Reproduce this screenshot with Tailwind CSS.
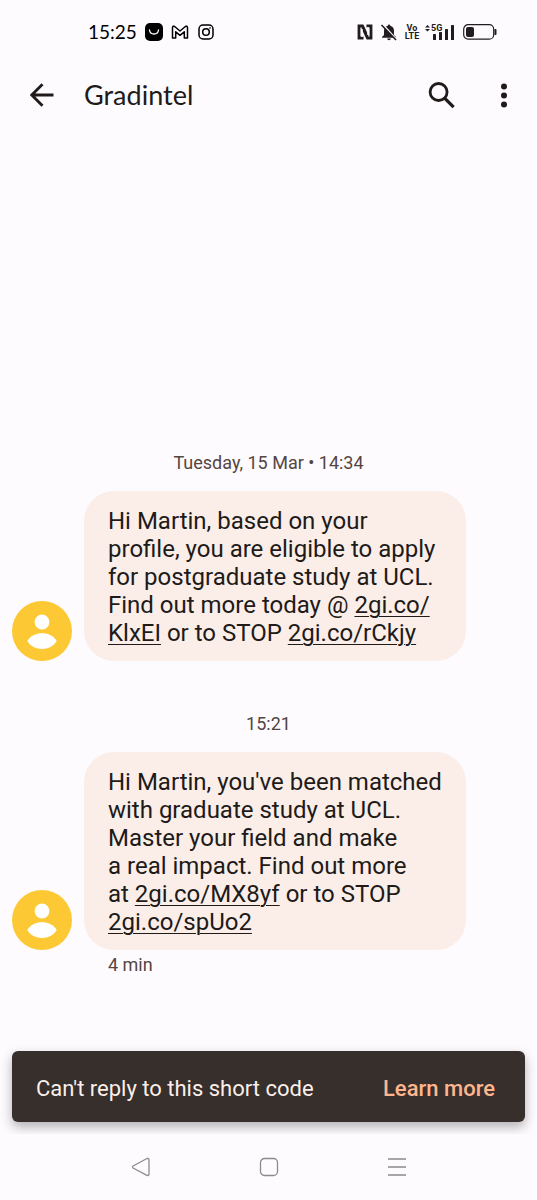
<!DOCTYPE html>
<html lang="en">
<head>
<meta charset="utf-8">
<meta name="viewport" content="width=device-width, initial-scale=1">
<title>Gradintel</title>
<script src="https://cdn.jsdelivr.net/npm/@tailwindcss/browser@4"></script>
</head>
<body class="flex min-h-screen flex-col bg-[#fefbff] font-['Roboto',sans-serif] text-[#201a18]">

<div class="flex h-16 items-center justify-between pr-10 pl-[88px] text-black">
  <div class="flex items-center">
    <time class="w-[57px] font-['Lato',sans-serif] text-[19px] leading-6">15:25</time>
    <svg class="h-[18px] w-[18px]" viewBox="0 0 18 18" aria-hidden="true"><rect width="18" height="18" rx="5"/><path d="M4.500 7c.5 5.300 8.500 5.300 9 0" fill="none" stroke="#fff" stroke-width="1.300" stroke-linecap="round"/></svg>
    <svg class="ml-2 h-[18px] w-[18px]" viewBox="0 0 18 18" fill="none" stroke="currentColor" stroke-width="1.500" stroke-linejoin="round" aria-hidden="true"><path d="M1.500 15V4.500Q2 2.600 3.600 3.500L9 8l5.400-4.500Q16 2.600 16.500 4.500V15h-3.200V8.800L9 12.300 4.700 8.800V15z"/></svg>
    <svg class="ml-2 h-[18px] w-[18px]" viewBox="0 0 18 18" fill="none" stroke="currentColor" stroke-width="1.500" aria-hidden="true"><rect x="2" y="2" width="14" height="14" rx="4"/><circle cx="9" cy="9" r="3.300"/><circle cx="13" cy="5" r=".4" stroke-width="1"/></svg>
  </div>
  <div class="flex items-center text-[#201c20]">
    <svg class="h-4 w-4" viewBox="0 0 16 16" fill="none" stroke="currentColor" aria-hidden="true"><path d="M6.500 14H2V2h3.500l4.800 10" stroke-width="2.800"/><path d="M9.500 2H14v12h-3.500L5.700 4" stroke-width="2.800"/><path d="M5 5v8M11 3v8" stroke="#fefbff" stroke-width="1.500"/></svg>
    <svg class="ml-[7px] h-[18px] w-[18px]" viewBox="0 0 18 18" aria-hidden="true"><path fill="currentColor" d="M9 1.500c.8 0 1.200.6 1.200 1.300 2.500.7 3.800 2.500 3.800 5V12l2 2v.8H2V14l2-2V7.800c0-2.500 1.300-4.300 3.800-5 0-.7.4-1.300 1.200-1.300zM7.200 15.500h3.600a1.800 1.800 0 0 1-3.600 0z"/><path d="M2.500 1l14 15.500" stroke="#fefbff" stroke-width="1.800"/><path d="M1.500 2l14.500 15" stroke="currentColor" stroke-width="1.600"/></svg>
    <span class="ml-2 flex w-3 flex-col items-center text-[9px] leading-[8px] font-bold"><span>Vo</span><span>LTE</span></span>
    <svg class="ml-[7px] h-[18px] w-[30px]" viewBox="0 0 30 18" fill="currentColor" aria-hidden="true"><path d="M0 4.500L2.500 2 5 4.500zM0 6h5L2.500 8.500z"/><text x="6" y="8" font-size="9" font-weight="700">5G</text><rect x="8" y="11" width="3" height="6" rx=".5"/><rect x="14" y="9" width="3" height="8" rx=".5"/><rect x="20" y="6" width="3" height="11" rx=".5"/><rect x="26" y="2" width="3" height="15" rx=".5"/></svg>
    <svg class="ml-2 h-4 w-[34px]" viewBox="0 0 34 16" aria-hidden="true"><rect x=".7" y=".7" width="30" height="14.500" rx="4.500" fill="none" stroke="currentColor" stroke-width="1.200"/><rect x="3" y="3" width="8" height="10" rx="2" fill="currentColor"/><path d="M31.500 5h1q1 0 1 1v4q0 1-1 1h-1z" fill="currentColor"/></svg>
  </div>
</div>

<header class="flex h-[62px] items-center pr-[19px] pl-[30px]">
  <button type="button" aria-label="Back" class="h-6 w-6"><svg viewBox="0 0 24 24" fill="none" stroke="currentColor" stroke-width="2.800" aria-hidden="true"><path d="M23.500 12H2M12.500 1.200L1.800 12l10.700 10.800"/></svg></button>
  <h1 class="ml-[30px] flex-1 font-['Lato',sans-serif] text-[27px] leading-8">Gradintel</h1>
  <button type="button" aria-label="Search" class="h-7 w-7"><svg viewBox="0 0 28 28" fill="none" stroke="currentColor" stroke-width="2.800" aria-hidden="true"><circle cx="10.600" cy="11" r="8.500"/><path d="M16.600 17.200l9 9" stroke-width="3.200"/></svg></button>
  <button type="button" aria-label="More options" class="ml-[34px] h-7 w-7"><svg viewBox="0 0 28 28" fill="currentColor" aria-hidden="true"><circle cx="14" cy="5.500" r="3"/><circle cx="14" cy="14.500" r="3"/><circle cx="14" cy="23.500" r="3"/></svg></button>
</header>

<main class="flex flex-1 flex-col justify-end overflow-hidden px-3 pb-3">
  <time class="mb-4 text-center text-lg leading-6 text-[#534541]">Tuesday, 15 Mar • 14:34</time>
  <div class="flex items-end gap-3">
    <svg class="h-[60px] w-[60px] shrink-0" viewBox="0 0 60 60" aria-hidden="true"><circle cx="30" cy="30" r="30" fill="#fcc934"/><circle cx="30" cy="21" r="7.400" fill="#fff"/><path d="M15.300 40C21 29.500 39 29.500 44.700 40 39 50.500 21 50.500 15.300 40z" fill="#fff"/></svg>
    <p class="w-full max-w-[382px] rounded-[30px] bg-[#fbeee9] px-6 pt-4 pb-[14px] text-2xl leading-7">Hi Martin, based on your<br>profile, you are eligible to apply<br>for postgraduate study at UCL.<br>Find out more today @ <a href="#" class="underline decoration-1 underline-offset-3">2gi.co/<br>KlxEI</a> or to STOP <a href="#" class="underline decoration-1 underline-offset-3">2gi.co/rCkjy</a></p>
  </div>
  <time class="mt-[51px] mb-4 text-center text-lg leading-6 text-[#534541]">15:21</time>
  <div class="flex items-end gap-3">
    <svg class="h-[60px] w-[60px] shrink-0" viewBox="0 0 60 60" aria-hidden="true"><circle cx="30" cy="30" r="30" fill="#fcc934"/><circle cx="30" cy="21" r="7.400" fill="#fff"/><path d="M15.300 40C21 29.500 39 29.500 44.700 40 39 50.500 21 50.500 15.300 40z" fill="#fff"/></svg>
    <p class="w-full max-w-[382px] rounded-[30px] bg-[#fbeee9] px-6 pt-4 pb-[14px] text-2xl leading-7">Hi Martin, you've been matched<br>with graduate study at UCL.<br>Master your field and make<br>a real impact. Find out more<br>at <a href="#" class="underline decoration-1 underline-offset-3">2gi.co/MX8yf</a> or to STOP<br><a href="#" class="underline decoration-1 underline-offset-3">2gi.co/spUo2</a></p>
  </div>
  <span class="mt-[3px] ml-24 text-lg leading-6 text-[#534541]">4 min</span>
  <div role="status" class="mt-[74px] flex h-[71px] items-center justify-between rounded-md bg-[#362f2c] pt-1 pr-[30px] pl-6 text-[22px] leading-8 text-[#fbeee9] shadow-[0_5px_12px_rgba(0,0,0,0.3)]">
    <span>Can't reply to this short code</span>
    <button type="button" class="font-medium text-[#ffb68f]">Learn more</button>
  </div>
</main>

<nav aria-label="System navigation" class="flex h-[66px] items-center justify-center gap-[108px] text-[#8d898e]">
  <button type="button" aria-label="Back" class="h-5 w-5"><svg viewBox="0 0 20 20" fill="none" stroke="currentColor" stroke-width="1.300" stroke-linejoin="round" aria-hidden="true"><path d="M2 9L16 1.500Q18 1 18 3V17Q18 19 16 18.300L2 11Q1 10 2 9z"/></svg></button>
  <button type="button" aria-label="Home" class="h-5 w-5"><svg viewBox="0 0 20 20" fill="none" stroke="currentColor" stroke-width="1.300" aria-hidden="true"><rect x="1.500" y="1.500" width="17" height="17" rx="4"/></svg></button>
  <button type="button" aria-label="Recent apps" class="h-5 w-5"><svg viewBox="0 0 20 20" fill="none" stroke="currentColor" stroke-width="1.300" aria-hidden="true"><path d="M1 2h18M1 10h18M1 18h18"/></svg></button>
</nav>
</body>
</html>
